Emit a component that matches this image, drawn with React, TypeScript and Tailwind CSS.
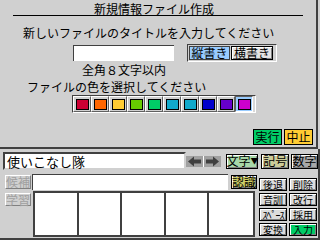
const swatches = [
  "#cc0033",
  "#ff6600",
  "#ffcc33",
  "#66cc00",
  "#00cc66",
  "#11aacc",
  "#11aacc",
  "#0000cc",
  "#6600cc",
  "#cc00cc",
];

const raised =
  "border border-black shadow-[inset_1px_1px_0_#ffffff,inset_-1px_-1px_0_#808080]";

function Key({ label, className = "" }: { label: string; className?: string }) {
  return (
    <div
      className={`flex h-[13px] items-center justify-center whitespace-nowrap text-[10px] leading-[10px] ${raised} ${className}`}
    >
      {label}
    </div>
  );
}

export default function App() {
  return (
    <div className="h-[240px] w-[320px] overflow-hidden bg-[#d0d0d0] font-['Noto_Sans_CJK_JP',sans-serif] text-[12px] leading-[12px] text-black">
      <section className="flex h-[149px] w-[318px] flex-col border-b-2 border-r-2 border-[#404040]">
        <div className="mx-[13px] mt-[2px] h-[14px] border-b border-black pr-[8px] text-center leading-[13px]">
          新規情報ファイル作成
        </div>
        <div className="mt-[11px] h-[12px] pl-[23px]">
          新しいファイルのタイトルを入力してください
        </div>
        <div className="mt-[5px] flex h-[18px] items-center">
          <div className="ml-[73px] h-[16px] w-[101px] border-l border-t border-[#404040] bg-white" />
          <div className="ml-[13px] flex h-[18px] w-[90px] gap-[1px] border border-b-white border-l-[#404040] border-r-white border-t-[#404040] p-[1px]">
            <div className="flex w-[41px] items-center justify-center whitespace-nowrap border border-[#404040] bg-[#99ccff] leading-none">
              縦書き
            </div>
            <div
              className={`flex w-[42px] items-center justify-center whitespace-nowrap bg-[#e4e4e4] leading-none ${raised}`}
            >
              横書き
            </div>
          </div>
        </div>
        <div className="mt-[2px] h-[12px] pl-[82px]">全角８文字以内</div>
        <div className="mt-[5px] h-[12px] pl-[27px]">
          ファイルの色を選択してください
        </div>
        <div className="ml-[72px] mt-[2px] flex h-[18px] w-[184px] border border-b-white border-l-[#404040] border-r-white border-t-[#404040] bg-[#d8d8d8]">
          {swatches.map((c, i) => (
            <div
              key={i}
              className={
                i === 9
                  ? "flex w-[18px] items-center justify-center border border-b-white border-l-[#606060] border-r-white border-t-[#606060] bg-[#99ccff]"
                  : "flex w-[18px] items-center justify-center border border-b-[#606060] border-l-white border-r-[#606060] border-t-white bg-[#d0d0d0]"
              }
            >
              <div
                className="h-[11px] w-[13px] border border-black"
                style={{ backgroundColor: c }}
              />
            </div>
          ))}
        </div>
        <div className="mt-[16px] flex h-[16px] justify-end gap-[2px] pr-[3px]">
          <div className="flex w-[29px] items-center justify-center border border-black bg-[#00cc66] leading-none">
            実行
          </div>
          <div className="flex w-[29px] items-center justify-center border border-black bg-[#ffcc33] leading-none">
            中止
          </div>
        </div>
      </section>

      <section className="flex h-[91px] w-[320px] flex-col border-b-2 border-r-2 border-[#404040] pt-[3px]">
        <div className="flex h-[18px] items-center">
          <div className="ml-[3px] flex h-[18px] w-[185px] items-center border-2 border-b-[#d0d0d0] border-l-[#404040] border-r-[#d0d0d0] border-t-[#404040] bg-white pl-[2px] text-[13px] leading-none">
            使いこなし隊
          </div>
          <div className="flex h-[11px] w-[35px] items-center bg-[#a0a0a0]">
            <svg width="35" height="11" viewBox="0 0 35 11">
              <polygon points="2,5.5 8,0.5 8,3.5 15,3.5 15,7.5 8,7.5 8,10.5" fill="#404040" />
              <rect x="17" y="0" width="1" height="11" fill="#ffffff" />
              <polygon points="33,5.5 27,0.5 27,3.5 20,3.5 20,7.5 27,7.5 27,10.5" fill="#404040" />
            </svg>
          </div>
          <div
            className={`ml-[5px] flex h-[15px] w-[32px] items-center justify-center whitespace-nowrap bg-[#a8d8a8] leading-none ${raised}`}
          >
            文字<span className="text-[8px]">▼</span>
          </div>
          <div
            className={`ml-[3px] flex h-[15px] w-[28px] items-center justify-center whitespace-nowrap bg-[#cccc99] leading-none ${raised}`}
          >
            記号
          </div>
          <div
            className={`ml-[2px] flex h-[15px] w-[27px] items-center justify-center whitespace-nowrap bg-[#a8a8a8] leading-none ${raised}`}
          >
            数字
          </div>
        </div>

        <div className="mt-[4px] flex">
          <div className="flex w-[257px] flex-col">
            <div className="flex h-[16px] items-center">
              <div className="ml-[5px] flex h-[14px] w-[26px] items-center justify-center whitespace-nowrap border border-b-[#808080] border-l-white border-r-[#808080] border-t-white leading-none text-[#a0a0a0]">
                候補
              </div>
              <div className="ml-[1px] h-[16px] w-[196px] border-l border-t border-[#404040] bg-white" />
              <div
                className={`ml-[3px] flex h-[14px] w-[26px] items-center justify-center whitespace-nowrap bg-[#cccc66] leading-none ${raised}`}
              >
                認識
              </div>
            </div>
            <div className="mt-[1px] flex">
              <div className="ml-[5px] mt-[2px] flex h-[13px] w-[26px] items-center justify-center whitespace-nowrap border border-b-[#808080] border-l-white border-r-[#808080] border-t-white leading-none text-[#a0a0a0]">
                学習
              </div>
              <div className="ml-[2px] grid h-[46px] w-[222px] grid-cols-5 border-2 border-[#404040] bg-white">
                <div className="border-r-2 border-[#404040]" />
                <div className="border-r-2 border-[#404040]" />
                <div className="border-r-2 border-[#404040]" />
                <div className="border-r-2 border-[#404040]" />
                <div />
              </div>
            </div>
          </div>
          <div className="ml-[2px] mt-[4px] grid h-[58px] w-[58px] grid-cols-2 gap-x-[2px] gap-y-[2px]">
            <Key label="後退" className="bg-[#dcdcdc]" />
            <Key label="削除" className="bg-[#dcdcdc]" />
            <Key label="音訓" className="bg-[#dcdcdc]" />
            <Key label="改行" className="bg-[#dcdcdc]" />
            <Key label="ｽﾍﾟｰｽ" className="bg-[#dcdcdc] text-[9px] tracking-[-1px]" />
            <Key label="採用" className="bg-[#dcdcdc]" />
            <Key label="変換" className="bg-[#dcdcdc]" />
            <Key label="入力" className="bg-[#00cc66]" />
          </div>
        </div>
      </section>
    </div>
  );
}
